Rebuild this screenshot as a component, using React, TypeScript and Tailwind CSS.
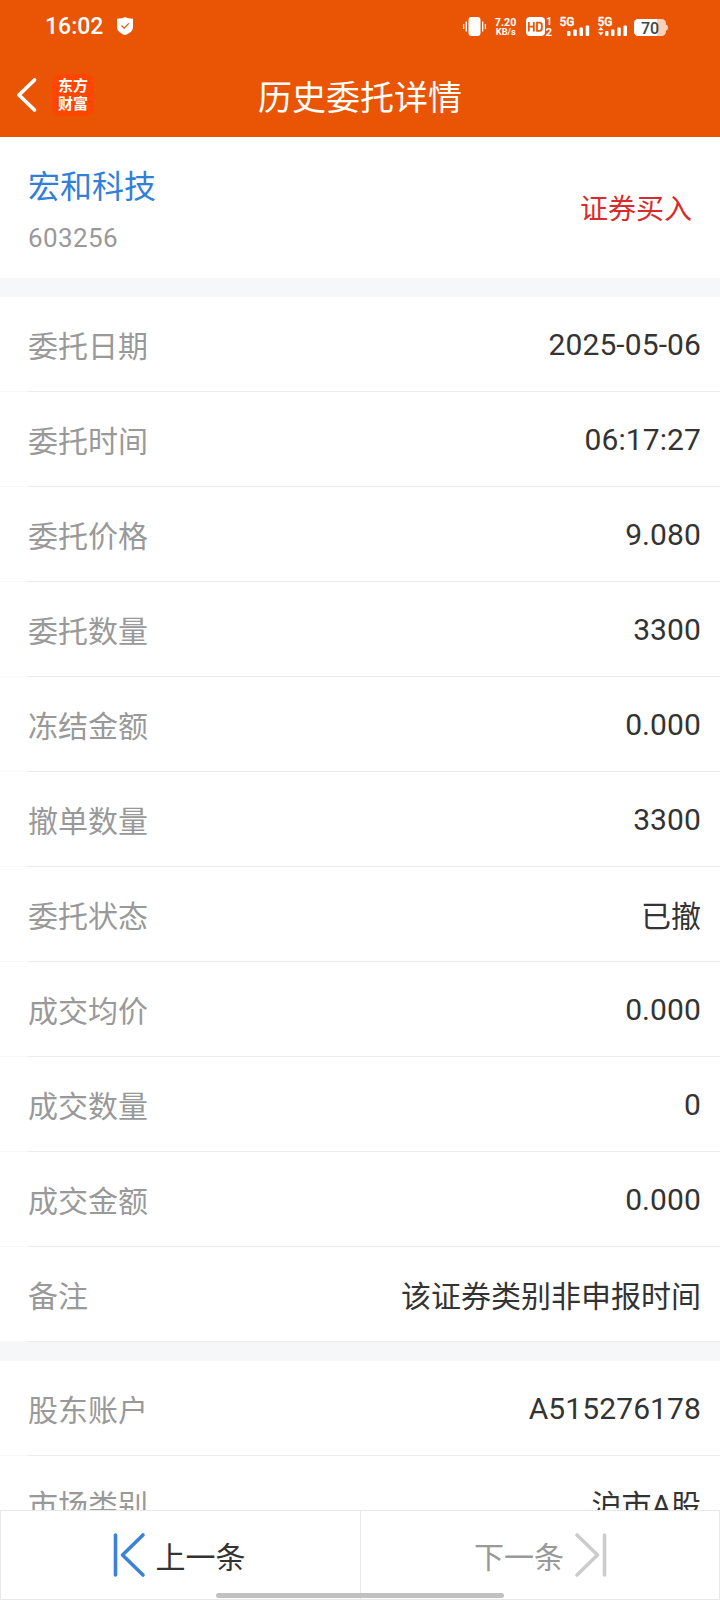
import React from 'react';

interface DetailItem {
  label: string;
  value: string;
  cjk?: boolean;
}

const ORDER_ITEMS: DetailItem[] = [
  { label: '委托日期', value: '2025-05-06' },
  { label: '委托时间', value: '06:17:27' },
  { label: '委托价格', value: '9.080' },
  { label: '委托数量', value: '3300' },
  { label: '冻结金额', value: '0.000' },
  { label: '撤单数量', value: '3300' },
  { label: '委托状态', value: '已撤', cjk: true },
  { label: '成交均价', value: '0.000' },
  { label: '成交数量', value: '0' },
  { label: '成交金额', value: '0.000' },
  { label: '备注', value: '该证券类别非申报时间', cjk: true },
];

const ACCOUNT_ITEMS: DetailItem[] = [
  { label: '股东账户', value: 'A515276178' },
  { label: '市场类别', value: '沪市A股', cjk: true },
];

const DetailRow: React.FC<{ item: DetailItem }> = ({ item }) => (
  <div className="h-[95px] shrink-0 flex flex-col">
    <div className="flex-1 flex items-center justify-between pl-7 pr-[19px] text-[30px] leading-none">
      <span className="font-['Noto_Sans_CJK_SC',sans-serif] text-[#999999]">{item.label}</span>
      <span
        className={`text-[#333333] ${
          item.cjk
            ? "font-['Roboto','Noto_Sans_CJK_SC',sans-serif] pt-[5px]"
            : "font-['Roboto',sans-serif] pt-[2px] tracking-[0.1px]"
        }`}
      >
        {item.value}
      </span>
    </div>
    <div className="h-px bg-[#f8f8f8]">
      <div className="h-px ml-7 bg-[#ebebeb]" />
    </div>
  </div>
);

const StatusBar: React.FC = () => (
  <div className="h-[52px] flex items-center justify-between text-white">
    <div className="flex items-center pl-[45px] font-['Roboto',sans-serif]">
      <span className="text-[23px] leading-none font-medium w-[72px] pt-px">16:02</span>
      <svg width="16" height="18" viewBox="0 0 16 18">
        <path
          d="M8 0C10 1.3 13 1.6 16 1.7V10c0 4-3.5 6.5-8 8-4.500-1.500-8-4-8-8V1.700C3 1.600 6 1.300 8 0z"
          fill="#fff"
        />
        <path d="M4.500 8.500l2.700 2.700 4.600-4.800" fill="none" stroke="#e95504" strokeWidth="1.200" />
      </svg>
    </div>

    <svg width="260" height="52" viewBox="460 0 260 52" fill="#fff" className="font-['Roboto',sans-serif]">
      {/* vibrate */}
      <rect x="468.500" y="17" width="12" height="19" rx="3" />
      <path d="M463.600 24v5M466.300 21.500v10M482.700 21.500v10M485.400 24v5" stroke="#fff" strokeWidth="1.300" />

      {/* network speed */}
      <text x="494.800" y="25.800" fontSize="10.500" fontWeight="700" textLength="21.500" lengthAdjust="spacingAndGlyphs">7.20</text>
      <text x="495.800" y="35" fontSize="9.500" fontWeight="700" textLength="20" lengthAdjust="spacingAndGlyphs">KB/s</text>

      {/* HD calling */}
      <rect x="526" y="17" width="19" height="19" rx="4" />
      <path
        d="M528.800 22v9.500M533.800 22v9.500M528.800 26.700h5M537 22.700h2.300q2.500 0 2.500 2.300v3.500q0 2.300-2.500 2.300H537z"
        fill="none"
        stroke="#e95504"
        strokeWidth="1.800"
      />
      <text x="546.200" y="25" fontSize="10" fontWeight="700">1</text>
      <text x="545.600" y="35.800" fontSize="11.500" fontWeight="700">2</text>

      {/* sim 1 */}
      <text x="559.500" y="26" fontSize="12" fontWeight="500" stroke="#fff" strokeWidth="0.300">5G</text>
      <rect x="567" y="31" width="3.500" height="5" rx="1" />
      <rect x="573.300" y="29.500" width="3.500" height="6.500" rx="1" />
      <rect x="579.500" y="27.500" width="3.500" height="8.500" rx="1" />
      <rect x="585.700" y="25.500" width="3.500" height="10.500" rx="1" />

      {/* sim 2 */}
      <text x="597.500" y="26" fontSize="12" fontWeight="500" stroke="#fff" strokeWidth="0.300">5G</text>
      <path d="M598 30.300l2.800-3.300 2.800 3.300zM598 32.300l2.800 3.300 2.800-3.300z" />
      <rect x="605" y="31" width="3.500" height="5" rx="1" />
      <rect x="611" y="29.500" width="3.500" height="6.500" rx="1" />
      <rect x="617.300" y="27.500" width="3.500" height="8.500" rx="1" />
      <rect x="623.500" y="25.500" width="3.500" height="10.500" rx="1" />

      {/* battery */}
      <rect x="634" y="19" width="32" height="17" rx="4.500" fill="#fbd0b8" />
      <path d="M638.500 19H657v17h-18.500a4.500 4.500 0 0 1-4.500-4.500v-8a4.500 4.500 0 0 1 4.500-4.500z" />
      <path d="M666 24.500q2 .5 2 3t-2 3z" fill="#fbd0b8" />
      <text x="641" y="33.500" fontSize="16" fontWeight="500" fill="#444">70</text>
    </svg>
  </div>
);

const NavBar: React.FC = () => (
  <div className="h-[85px] grid grid-cols-[120px_1fr_120px] text-white font-['Noto_Sans_CJK_SC',sans-serif]">
    <div className="flex items-start pt-[22px] pl-4">
      <svg width="36" height="42" viewBox="0 0 36 42" className="shrink-0">
        <path
          d="M18.500 6L3 21l15.500 15"
          fill="none"
          stroke="#fff"
          strokeWidth="3.800"
          strokeLinecap="round"
          strokeLinejoin="round"
        />
      </svg>
      <div className="w-[42px] h-[42px] rounded-[9px] bg-[#ff4500] flex flex-col items-center justify-center pb-[2px] text-[15px] leading-[18px] font-bold">
        <span>东方</span>
        <span>财富</span>
      </div>
    </div>
    <h1 className="text-[34px] leading-[87px] text-center font-normal">历史委托详情</h1>
  </div>
);

const App: React.FC = () => {
  return (
    <div className="w-[720px] h-[1600px] bg-white flex flex-col overflow-hidden">
      <header className="h-[137px] shrink-0 bg-[#e95504]">
        <StatusBar />
        <NavBar />
      </header>

      <main className="flex-1 min-h-0 overflow-hidden flex flex-col">
        <section className="h-[141px] shrink-0 flex items-center justify-between pl-7 pr-7">
          <div className="flex flex-col pt-[2px]">
            <span className="font-['Noto_Sans_CJK_SC',sans-serif] text-[32px] leading-[48px] text-[#327fd8]">
              宏和科技
            </span>
            <span className="font-['Roboto',sans-serif] text-[26px] leading-[38px] mt-[11px] tracking-[0.4px] text-[#999999]">
              603256
            </span>
          </div>
          <span className="font-['Noto_Sans_CJK_SC',sans-serif] text-[28px] leading-none pb-[2px] text-[#d92b2b]">
            证券买入
          </span>
        </section>

        <div className="h-[19px] shrink-0 bg-[#f6f7f9]" />
        {ORDER_ITEMS.map((item) => (
          <DetailRow key={item.label} item={item} />
        ))}

        <div className="h-[19px] shrink-0 bg-[#f6f7f9]" />
        {ACCOUNT_ITEMS.map((item) => (
          <DetailRow key={item.label} item={item} />
        ))}
      </main>

      <footer className="relative h-[90px] shrink-0 grid grid-cols-[360px_1fr] border border-[#e9e9e9] bg-white font-['Noto_Sans_CJK_SC',sans-serif] text-[30px] leading-none">
        <button className="flex items-center justify-center gap-[10px] pr-[3px] border-r border-[#e9e9e9] text-[#333333]">
          <svg width="33" height="46" viewBox="0 0 33 46" fill="none" stroke="#3b82d8" strokeWidth="3.600" strokeLinecap="round" strokeLinejoin="round">
            <path d="M2.500 3v40M30 3L9.500 23 30 43" />
          </svg>
          <span>上一条</span>
        </button>
        <button className="flex items-center justify-center gap-[10px] pl-px text-[#999999]">
          <span>下一条</span>
          <svg width="33" height="46" viewBox="0 0 33 46" fill="none" stroke="#cccccc" strokeWidth="3.600" strokeLinecap="round" strokeLinejoin="round">
            <path d="M30.500 3v40M3 3l20.500 20L3 43" />
          </svg>
        </button>
        {/* system gesture handle */}
        <div className="absolute left-[215px] bottom-[1px] w-[288px] h-[5px] rounded-full bg-[#c1c1c1]" />
      </footer>
    </div>
  );
};

export default App;
